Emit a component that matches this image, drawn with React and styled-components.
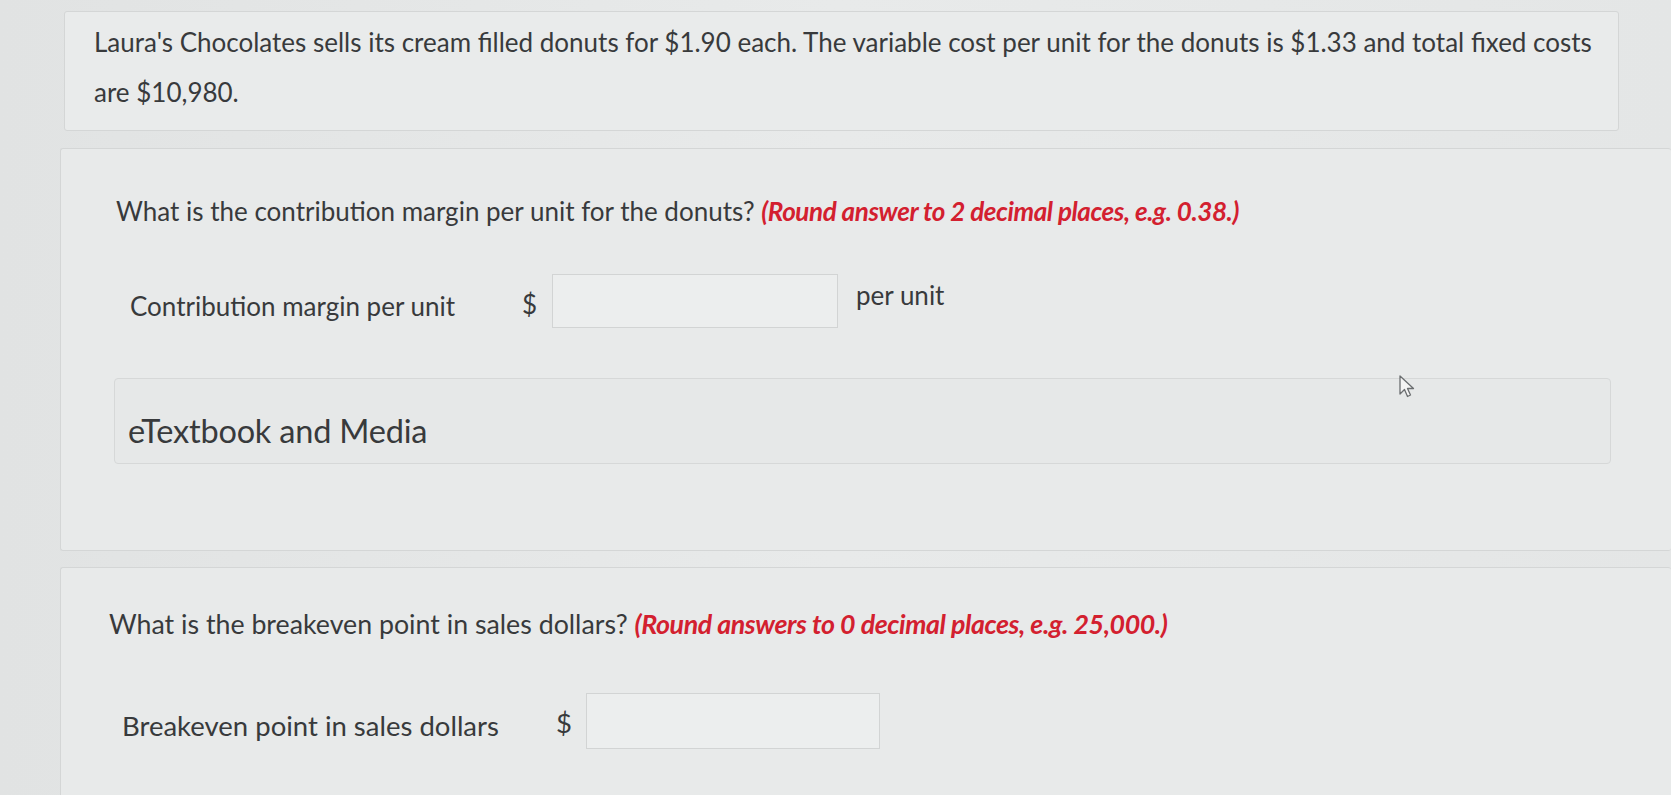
import React from 'react';
import styled, { createGlobalStyle } from 'styled-components';

const GlobalStyle = createGlobalStyle`
  html, body {
    margin: 0;
    padding: 0;
    background: #e3e5e5;
  }
  body {
    font-family: Lato, "Open Sans", sans-serif;
    color: #383a3c;
  }
`;

const Page = styled.div`
  width: 1671px;
  height: 795px;
  overflow: hidden;
  display: flex;
  flex-direction: column;
  padding: 11px 0 0 64px;
  box-sizing: border-box;
  background: linear-gradient(90deg, #e1e3e3 0%, #e8eaea 50%, #e4e6e6 100%);
`;

const Card = styled.div`
  background: ${({ tone }) => tone || '#e9ebeb'};
  border: 1px solid #d4d6d6;
  border-radius: 3px;
  box-sizing: border-box;
  margin-right: ${({ right }) => right || '0px'};
  margin-left: ${({ left }) => left || '0px'};
  margin-top: ${({ top }) => top || '0px'};
  padding: ${({ pad }) => pad || '0'};
  min-height: ${({ h }) => h || 'auto'};
  border-right: ${({ open }) => (open ? 'none' : '1px solid #d4d6d6')};
`;

const Intro = styled.p`
  margin: 0;
  font-size: 26px;
  line-height: 50px;
`;

const Question = styled.p`
  margin: 0;
  font-size: ${({ size }) => size || '26px'};
  line-height: 32px;
`;

const Hint = styled.span`
  color: #d3202f;
  font-weight: 700;
  font-style: italic;
  letter-spacing: -0.4px;
`;

const Row = styled.div`
  display: flex;
  align-items: center;
  margin-top: ${({ top }) => top};
  padding-left: ${({ indent }) => indent};
  font-size: ${({ size }) => size || '26px'};
`;

const Label = styled.span`
  width: ${({ w }) => w};
  padding-top: ${({ drop }) => drop || '0px'};
`;

const Dollar = styled.span`
  width: 30px;
  padding-top: ${({ drop }) => drop || '0px'};
`;

const AnswerBox = styled.div`
  width: ${({ w }) => w};
  height: ${({ h }) => h};
  background: #eceeee;
  border: 1px solid #d2d4d4;
  box-sizing: border-box;
`;

const Unit = styled.span`
  margin-left: 18px;
  margin-top: -12px;
`;

const MediaBar = styled.div`
  margin: 50px 60px 0 -2px;
  height: 86px;
  display: flex;
  align-items: center;
  padding: 18px 0 0 13px;
  box-sizing: border-box;
  background: #e6e8e8;
  border: 1px solid #d6d8d8;
  border-radius: 4px;
  font-size: 32.5px;
  letter-spacing: -0.2px;
  position: relative;
`;

const Cursor = styled.svg`
  position: absolute;
  right: 192px;
  top: -4px;
`;

export default function App() {
  return (
    <>
      <GlobalStyle />
      <Page>
        <Card pad="5px 0 10px 29px" right="52px" h="120px">
          <Intro>
            Laura's Chocolates sells its cream filled donuts for $1.90 each. The variable cost per unit for the donuts is $1.33 and total fixed costs
            <br />
            are $10,980.
          </Intro>
        </Card>

        <Card open tone="#e8eaea" pad="46px 0 0 55px" top="17px" left="-4px" h="403px">
          <Question>
            What is the contribution margin per unit for the donuts? <Hint>(Round answer to 2 decimal places, e.g. 0.38.)</Hint>
          </Question>
          <Row top="47px" indent="14px">
            <Label w="392px" drop="9px">Contribution margin per unit</Label>
            <Dollar drop="6px">$</Dollar>
            <AnswerBox w="286px" h="54px" />
            <Unit>per unit</Unit>
          </Row>
          <MediaBar>
            eTextbook and Media
            <Cursor width="20" height="24" viewBox="0 0 20 24">
              <path d="M2 1 L2 19 L6.5 14.5 L9.5 21.5 L12.5 20 L9.5 13.5 L15.5 13.5 Z" fill="#f4f4f4" stroke="#6b6e70" strokeWidth="1.3" strokeLinejoin="round" />
            </Cursor>
          </MediaBar>
        </Card>

        <Card open tone="#e8eaea" pad="40px 0 0 48px" top="16px" left="-4px" h="260px">
          <Question size="26.75px">
            What is the breakeven point in sales dollars? <Hint>(Round answers to 0 decimal places, e.g. 25,000.)</Hint>
          </Question>
          <Row top="53px" indent="13px" size="27.5px">
            <Label w="434px" drop="8px">Breakeven point in sales dollars</Label>
            <Dollar drop="2px">$</Dollar>
            <AnswerBox w="294px" h="56px" />
          </Row>
        </Card>
      </Page>
    </>
  );
}
